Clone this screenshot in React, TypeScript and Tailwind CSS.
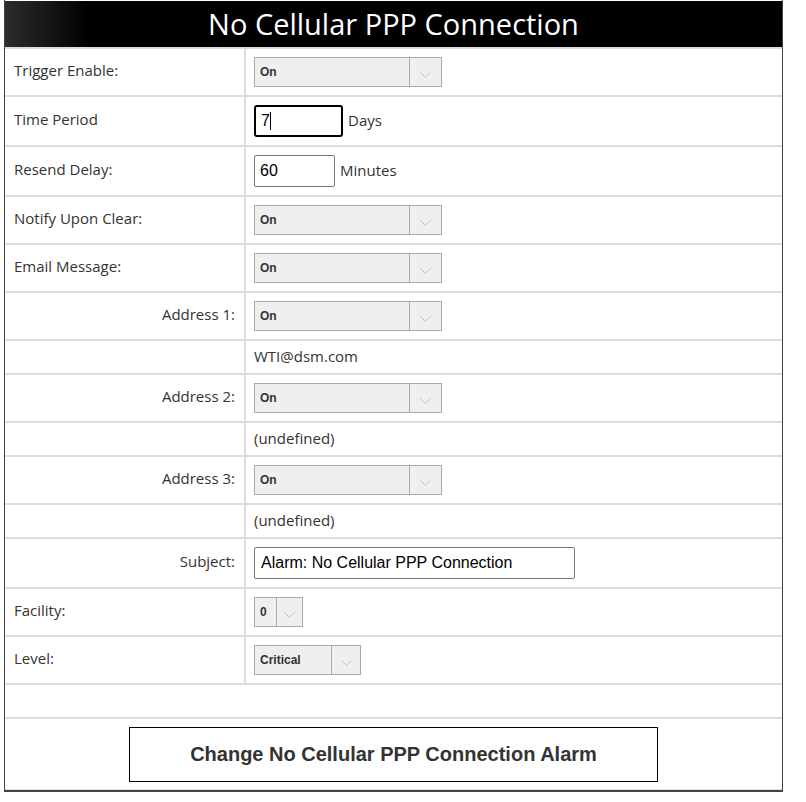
import React from "react";

const labelFont = { fontFamily: '"Open Sans", "Noto Sans", sans-serif' };
const arialFont = { fontFamily: '"Liberation Sans", Arial, sans-serif' };

function Chevron() {
  return (
    <svg width="11" height="6" viewBox="0 0 11 6" className="block">
      <polyline points="0.5,0.5 5.5,5.5 10.5,0.5" fill="none" stroke="#c4c4c4" strokeWidth="1" />
    </svg>
  );
}

function Select({ value, textW, arrowW }: { value: string; textW: string; arrowW: string }) {
  return (
    <div className="flex h-[30px] border border-[#a9a9a9] bg-[#efefef]">
      <div className={`${textW} flex items-center pl-[5px] text-[12px] font-bold text-[#333] border-r border-[#a9a9a9]`} style={arialFont}>
        {value}
      </div>
      <div className={`${arrowW} flex items-center justify-center pt-[6px]`}>
        <Chevron />
      </div>
    </div>
  );
}

function Row({ label, right, children, h }: { label?: string; right?: boolean; children?: React.ReactNode; h: string }) {
  return (
    <div className={`flex border-b-2 border-[#dddddd] ${h}`}>
      <div
        className={`w-[241px] shrink-0 border-r-2 border-[#dddddd] flex items-center pb-[3px] text-[15px] text-[#333] ${right ? "justify-end pr-[9px]" : "pl-[9px]"}`}
        style={labelFont}
      >
        {label}
      </div>
      <div className="flex-1 flex items-center pl-[8px] text-[15px] text-[#333]" style={labelFont}>
        {children}
      </div>
    </div>
  );
}

function Text({ children }: { children: React.ReactNode }) {
  return <span className="relative -top-[1px]">{children}</span>;
}

export default function App() {
  return (
    <div className="bg-white w-[806px] h-[802px]">
      <div className="ml-[4px] w-[779px] border-l border-r border-b-2 border-[#444] pt-px">
        <div
          className="h-[46px] flex items-center justify-center text-white text-[29px] border-b-2 border-[#dddddd] bg-[linear-gradient(to_right,#2c2c2c,#000_11%)] box-content"
          style={labelFont}
        >
          No Cellular PPP Connection
        </div>
        <Row label="Trigger Enable:" h="h-[48px]">
          <Select value="On" textW="w-[155px]" arrowW="w-[31px]" />
        </Row>
        <Row label="Time Period" h="h-[50px]">
          <div className="w-[89px] h-[32px] border-2 border-black rounded-[3px] flex items-center pl-[5px] text-[16px] text-black" style={arialFont}>
            7<span className="inline-block w-px h-[18px] bg-black" />
          </div>
          <span className="ml-[5px] relative -top-[1px]">Days</span>
        </Row>
        <Row label="Resend Delay:" h="h-[50px]">
          <div className="w-[81px] h-[32px] border border-[#767676] rounded-[2px] flex items-center pl-[5px] text-[16px] text-black" style={arialFont}>
            60
          </div>
          <span className="ml-[5px] relative -top-[1px]">Minutes</span>
        </Row>
        <Row label="Notify Upon Clear:" h="h-[48px]">
          <Select value="On" textW="w-[155px]" arrowW="w-[31px]" />
        </Row>
        <Row label="Email Message:" h="h-[48px]">
          <Select value="On" textW="w-[155px]" arrowW="w-[31px]" />
        </Row>
        <Row label="Address 1:" right h="h-[48px]">
          <Select value="On" textW="w-[155px]" arrowW="w-[31px]" />
        </Row>
        <Row h="h-[34px]"><Text>WTI@dsm.com</Text></Row>
        <Row label="Address 2:" right h="h-[48px]">
          <Select value="On" textW="w-[155px]" arrowW="w-[31px]" />
        </Row>
        <Row h="h-[34px]"><Text>(undefined)</Text></Row>
        <Row label="Address 3:" right h="h-[48px]">
          <Select value="On" textW="w-[155px]" arrowW="w-[31px]" />
        </Row>
        <Row h="h-[34px]"><Text>(undefined)</Text></Row>
        <Row label="Subject:" right h="h-[50px]">
          <div className="w-[321px] h-[32px] border border-[#767676] rounded-[2px] flex items-center pl-[6px] text-[16px] text-black" style={arialFont}>
            Alarm: No Cellular PPP Connection
          </div>
        </Row>
        <Row label="Facility:" h="h-[48px]">
          <Select value="0" textW="w-[22px]" arrowW="w-[25px]" />
        </Row>
        <Row label="Level:" h="h-[48px]">
          <Select value="Critical" textW="w-[77px]" arrowW="w-[28px]" />
        </Row>
        <div className="h-[34px] border-b-2 border-[#dddddd]" />
        <div className="pt-[8px] pb-[7px] border-b border-[#dddddd]">
          <div
            className="mx-auto w-[529px] h-[55px] border border-black flex items-center justify-center pb-[1px] text-[20px] font-bold text-[#333]"
            style={arialFont}
          >
            Change No Cellular PPP Connection Alarm
          </div>
        </div>
      </div>
    </div>
  );
}
